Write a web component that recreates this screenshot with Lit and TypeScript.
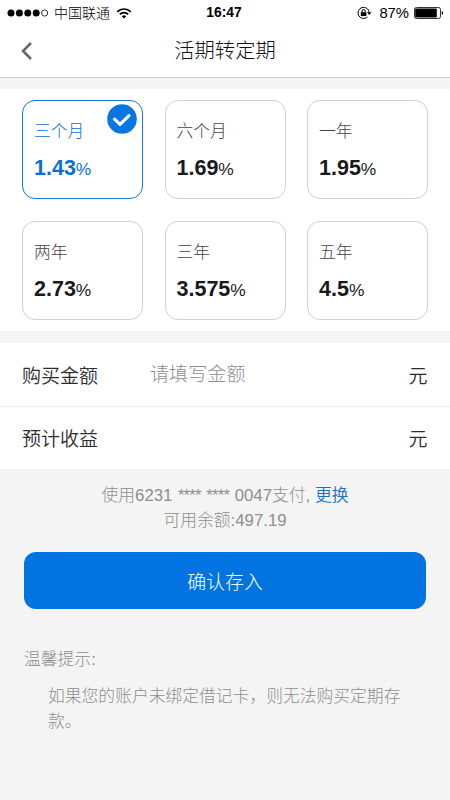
import { LitElement, html, css, svg, nothing } from "lit";
import { customElement, property, state } from "lit/decorators.js";
import { classMap } from "lit/directives/class-map.js";

interface Term {
  name: string;
  rate: string;
}

const TERMS: Term[] = [
  { name: "三个月", rate: "1.43" },
  { name: "六个月", rate: "1.69" },
  { name: "一年", rate: "1.95" },
  { name: "两年", rate: "2.73" },
  { name: "三年", rate: "3.575" },
  { name: "五年", rate: "4.5" },
];

@customElement("status-bar")
class StatusBar extends LitElement {
  static styles = css`
    :host {
      display: grid;
      grid-template-columns: 1fr auto 1fr;
      align-items: center;
      height: 25px;
      padding: 0 6px 0 7px;
      box-sizing: border-box;
      color: #000;
      font-size: 14px;
      line-height: 20px;
    }
    .side {
      display: flex;
      align-items: center;
    }
    .right {
      justify-content: flex-end;
    }
    .carrier {
      margin: 0 6px 0 5px;
      font-weight: 300;
    }
    .time {
      margin-right: 3px;
      font-weight: 700;
      font-size: 13.8px;
    }
    .percent {
      font-size: 14.8px;
      margin: 0 5px 0 7px;
    }
    svg {
      display: block;
      flex: none;
    }
  `;

  render() {
    return html`
      <div class="side">
        <svg width="42" height="10" viewBox="0 0 42 10">
          ${[4, 12.4, 20.8, 29.2].map((x) => svg`<circle cx=${x} cy="5" r="3.5" />`)}
          <circle cx="37.6" cy="5" r="3.1" fill="none" stroke="#000" stroke-width=".8" />
        </svg>
        <span class="carrier">中国联通</span>
        <svg width="16" height="12" viewBox="0 0 16 12" fill="none" stroke="#000" stroke-width="1.7">
          <path d="M1.2 4.8a9.6 9.6 0 0 1 13.6 0M3.8 7.4a5.9 5.9 0 0 1 8.4 0" />
          <path d="M8 11.6L5.8 9.4a3.1 3.1 0 0 1 4.4 0z" fill="#000" stroke="none" />
        </svg>
      </div>
      <span class="time">16:47</span>
      <div class="side right">
        <svg width="15" height="14" viewBox="0 0 15 14" fill="none" stroke="#000">
          <path d="M10.4 11A5.6 5.6 0 1 1 12.2 6.6" />
          <path d="M9.9 6.2h4.6L12.2 9z" fill="#000" stroke="none" />
          <path d="M3.8 6.2h5.6v3.9H3.8z" fill="#000" stroke="none" />
          <path d="M5 6.4V5.1a1.6 1.6 0 0 1 3.2 0v1.3" />
        </svg>
        <span class="percent">87%</span>
        <svg width="30" height="12" viewBox="0 0 30 12">
          <rect x=".5" y=".5" width="26" height="11" rx="2" fill="none" stroke="#333" />
          <rect x="1.2" y="1.4" width="21.6" height="9.2" rx=".8" />
          <path d="M27.8 4c1.8.6 1.8 3.4 0 4z" />
        </svg>
      </div>
    `;
  }
}

@customElement("term-card")
class TermCard extends LitElement {
  @property() name = "";
  @property() rate = "";
  @property({ type: Boolean }) selected = false;

  static styles = css`
    .card {
      position: relative;
      box-sizing: border-box;
      height: 99px;
      padding: 19px 11px 0;
      border: 1px solid #d0d0d0;
      border-radius: 13px;
      color: #1a1a1a;
      background: #fff;
    }
    .name {
      font-size: 16.8px;
      line-height: 24px;
      font-weight: 300;
      color: #444;
    }
    .rate {
      margin-top: 11px;
      font-size: 17.4px;
      line-height: 26px;
    }
    .value {
      font-size: 21.5px;
      font-weight: 700;
    }
    .selected {
      border-color: #1678d2;
    }
    .selected,
    .selected .name {
      color: #0b70d4;
    }
    .tick {
      position: absolute;
      top: 3px;
      right: 5px;
      display: block;
    }
  `;

  render() {
    return html`
      <div class=${classMap({ card: true, selected: this.selected })}>
        <div class="name">${this.name}</div>
        <div class="rate"><span class="value">${this.rate}</span>%</div>
        ${this.selected
          ? html`<svg class="tick" width="30" height="30" viewBox="0 0 30 30">
              <circle cx="15" cy="15" r="14.8" fill="#0876e0" />
              <path
                d="M7.6 15.2l5.4 5.2 9-8.8"
                fill="none"
                stroke="#fff"
                stroke-width="3.2"
                stroke-linecap="round"
                stroke-linejoin="round"
              />
            </svg>`
          : nothing}
      </div>
    `;
  }
}

@customElement("app-root")
class AppRoot extends LitElement {
  @state() private chosen = 0;

  static styles = css`
    :host {
      display: flex;
      flex-direction: column;
      height: 800px;
      overflow: hidden;
      background: #f4f4f4;
      color: #333;
      font-family: "Liberation Sans", "Noto Sans CJK SC", sans-serif;
    }
    .top {
      background: #fff;
      border-bottom: 1px solid #cbcbcb;
      height: 77px;
      box-sizing: content-box;
    }
    .nav {
      display: grid;
      grid-template-columns: 60px 1fr 60px;
      align-items: center;
      height: 51px;
    }
    .back {
      display: block;
      margin-left: 20px;
    }
    .title {
      text-align: center;
      font-size: 20.3px;
      line-height: 30px;
      font-weight: 300;
      color: #111;
    }
    .terms {
      display: grid;
      grid-template-columns: repeat(3, 1fr);
      gap: 22px 21.5px;
      margin-top: 11px;
      padding: 11px 22px;
      background: #fff;
    }
    .form {
      margin-top: 12px;
      background: #fff;
    }
    .row {
      display: grid;
      grid-template-columns: 128px 1fr auto;
      align-items: center;
      height: 63px;
      padding: 4px 22.5px 0 22px;
      box-sizing: border-box;
      font-size: 19px;
      line-height: 28px;
      font-weight: 350;
      color: #2c2c2c;
    }
    .row + .row {
      border-top: 1px solid #eee;
    }
    .hint {
      margin-top: -3px;
      font-size: 19.1px;
      font-weight: 300;
      color: #8e8e8e;
    }
    .pay {
      margin-top: 14px;
      text-align: center;
      font-size: 16.8px;
      line-height: 25px;
      font-weight: 300;
      color: #8e8e8e;
    }
    .mask {
      letter-spacing: -0.8px;
      word-spacing: 1.6px;
    }
    .change {
      color: #1a70c8;
      font-weight: 350;
    }
    .confirm {
      display: block;
      height: 57px;
      margin: 19px 24px 0;
      padding: 0 0 1px;
      border: 0;
      border-radius: 12px;
      background: #0274e2;
      color: #fff;
      font: inherit;
      font-size: 18.9px;
      font-weight: 300;
    }
    .tips {
      margin: 38px 24px 0;
      font-size: 16.8px;
      line-height: 25px;
      font-weight: 300;
      color: #8e8e8e;
    }
    .tips p {
      margin: 12px -2px 0 24px;
    }
  `;

  render() {
    return html`
      <header class="top">
        <status-bar></status-bar>
        <div class="nav">
          <svg class="back" width="14" height="20" viewBox="0 0 14 20">
            <path d="M11 2L3 10l8 8" fill="none" stroke="#666" stroke-width="2.5" />
          </svg>
          <div class="title">活期转定期</div>
        </div>
      </header>
      <section class="terms">
        ${TERMS.map(
          (t, i) => html`<term-card
            .name=${t.name}
            .rate=${t.rate}
            .selected=${i === this.chosen}
            @click=${() => (this.chosen = i)}
          ></term-card>`,
        )}
      </section>
      <section class="form">
        <div class="row"><span>购买金额</span><span class="hint">请填写金额</span><span>元</span></div>
        <div class="row"><span>预计收益</span><span></span><span>元</span></div>
      </section>
      <section class="pay">
        <div>使用6231<span class="mask"> **** **** </span>0047支付, <span class="change">更换</span></div>
        <div>可用余额:497.19</div>
      </section>
      <button class="confirm">确认存入</button>
      <section class="tips">
        <div>温馨提示:</div>
        <p>如果您的账户未绑定借记卡，则无法购买定期存款。</p>
      </section>
    `;
  }
}
